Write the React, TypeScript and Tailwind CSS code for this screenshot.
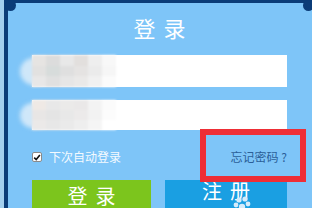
import React from 'react';

const mosaicA = [
  ['#e6e4e2', '#dcdcdc', '#e8e8e8', '#e2dfdd', '#eeeeee', '#f8f8f8'],
  ['#e2e1e0', '#d7dcdb', '#dfdfdf', '#e5e3e2', '#ebebeb', '#f6f6f6'],
  ['#e8e7e7', '#e0e0e0', '#e6e6e6', '#eae9e8', '#f1f1f1', '#fbfbfb'],
];

const mosaicB = [
  ['#efe9e5', '#e8e8e8', '#ebeae9', '#eae8e8', '#f3f3f3', '#fbfbfb'],
  ['#e8e6e5', '#e4e4e4', '#e8e8e8', '#eceaea', '#f2f2f2', '#fcfcfc'],
  ['#ebe9e8', '#e7e7e7', '#eaeaea', '#eeeeee', '#f5f5f5', '#ffffff'],
];

function BlurredField({ rows, tall }: { rows: string[][]; tall?: boolean }) {
  return (
    <div className={tall ? 'relative h-[32px] bg-white' : 'relative h-[30px] bg-white'}>
      {/* 打码区域 */}
      <div className="absolute -left-[12px] top-[3px] bottom-[2px] w-[30px] rounded-full bg-[#cfe7f9] blur-[2px]" />
      <div className="relative grid h-full w-[84px] grid-rows-3 blur-[1px]">
        {rows.map((row, i) => (
          <div key={i} className="flex">
            {row.map((c, j) => (
              <div key={j} className="h-full flex-1" style={{ backgroundColor: c }} />
            ))}
          </div>
        ))}
      </div>
    </div>
  );
}

export default function App() {
  return (
    <div className="relative h-[208px] w-[312px] overflow-hidden border-l-[4px] border-[#a3cfee] bg-[#7ec5f8] font-['Microsoft_YaHei','Noto_Sans_CJK_SC',sans-serif]">
      <div className="h-full border-l-[4px] border-t-[3px] border-[#0b3c78] pl-[24px] pr-[25px] pt-[9px]">
        <div className="flex h-[30px] items-center justify-center pl-[8px] text-[22px] leading-[30px] tracking-[8px] text-white">
          登录
        </div>

        <div className="mt-[13px]">
          <BlurredField rows={mosaicA} tall />
        </div>
        <div className="mt-[13px]">
          <BlurredField rows={mosaicB} />
        </div>

        <div className="mt-[19px] flex h-[16px] items-center justify-between text-[12px] leading-[16px]">
          <label className="flex items-center">
            <span className="flex h-[10px] w-[10px] items-center justify-center rounded-[2px] border border-[#8a8a8a] bg-white">
              <svg viewBox="0 0 10 10" className="h-[9px] w-[9px]">
                <path d="M1.5 5.2 L4 7.6 L8.6 1.8" fill="none" stroke="#111" strokeWidth="2" />
              </svg>
            </span>
            <span className="ml-[7px] text-[#f4faff]">下次自动登录</span>
          </label>
          <span className="text-[#2b5f98]">忘记密码 ?</span>
        </div>

        <div className="mt-[15px] flex gap-[14px]">
          <button className="h-[28px] w-[119px] bg-[#7cc51d] pl-[8px] pt-[3px] text-[20px] leading-[24px] tracking-[8px] text-white">
            登录
          </button>
          <button className="relative flex h-[28px] flex-1 items-start justify-center bg-[#1a9fe2] pl-[8px] text-[20px] leading-[22px] tracking-[8px] text-white">
            注册
            <svg viewBox="0 0 20 16" className="absolute left-[68px] top-[14px] h-[16px] w-[20px] blur-[0.5px]">
              <circle cx="6" cy="6" r="2.6" fill="#d6ecfb" />
              <circle cx="12" cy="5" r="2.6" fill="#d6ecfb" />
              <circle cx="3" cy="11" r="2.4" fill="#d6ecfb" />
              <circle cx="15" cy="10" r="2.4" fill="#d6ecfb" />
              <circle cx="9" cy="13" r="3.2" fill="#d6ecfb" />
            </svg>
          </button>
        </div>
      </div>

      {/* 角上的圆点 */}
      <div className="absolute left-[1px] top-0 h-[11px] w-[11px] rounded-full bg-[#0b3c78]" />
      <div className="absolute right-[-2px] top-0 h-[11px] w-[11px] rounded-full bg-[#0b3c78]" />

      {/* 红色标注框 */}
      <div className="absolute left-[196px] top-[129px] h-[53px] w-[106px] border-[6px] border-[#ee2e36]" />
    </div>
  );
}
